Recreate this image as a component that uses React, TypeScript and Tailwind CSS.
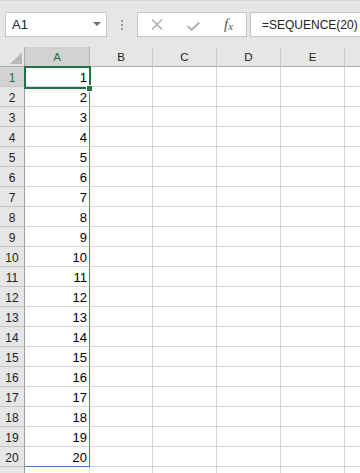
import React from "react";

const cols = [
  { name: "A", w: "w-[65px]" },
  { name: "B", w: "w-[63px]" },
  { name: "C", w: "w-[64px]" },
  { name: "D", w: "w-[64px]" },
  { name: "E", w: "w-[64px]" },
  { name: "", w: "w-[64px]" },
];

const rows = Array.from({ length: 21 }, (_, i) => i + 1);

export default function App() {
  return (
    <div className="w-[360px] h-[473px] overflow-hidden bg-white font-['Liberation_Sans',Arial,sans-serif] text-[#222]">
      {/* Toolbar */}
      <div className="h-[47px] bg-[#e6e6e6] border-t border-[#d9d9d9] flex items-start pl-[5px] pt-[11px]">
        <div className="w-[102px] h-[25px] shrink-0 bg-white border border-[#c6c6c6] flex items-center pl-[6px] pr-[5px]">
          <span className="text-[13px] leading-none text-[#222] flex-1">A1</span>
          <svg width="8" height="5" viewBox="0 0 8 5">
            <path d="M0 0 H8 L4 4 Z" fill="#6d6d6d" />
          </svg>
        </div>
        <div className="w-[30px] h-[25px] shrink-0 flex flex-col items-center justify-center gap-[2px]">
          <div className="w-[2px] h-[2px] bg-[#9a9a9a]" />
          <div className="w-[2px] h-[2px] bg-[#9a9a9a]" />
          <div className="w-[2px] h-[2px] bg-[#9a9a9a]" />
        </div>
        <div className="w-[110px] h-[25px] shrink-0 bg-white border border-[#c6c6c6] flex items-center">
          <div className="w-[37px] flex justify-center">
            <svg width="12" height="11" viewBox="0 0 12 11">
              <path d="M1 0.5 L11 10.5 M11 0.5 L1 10.5" stroke="#a8a8a8" strokeWidth="1.3" fill="none" />
            </svg>
          </div>
          <div className="w-[36px] flex justify-center pt-[3px]">
            <svg width="13" height="9" viewBox="0 0 13 9">
              <path d="M0.8 4.2 L4.5 7.8 L12.3 0.6" stroke="#a8a8a8" strokeWidth="1.8" fill="none" />
            </svg>
          </div>
          <div className="flex-1 flex justify-center items-center font-['Liberation_Serif',serif] italic text-[#5a5a5a] leading-none">
            <span className="text-[15px]">f</span>
            <span className="text-[11px] mt-[4px]">x</span>
          </div>
        </div>
        <div className="ml-[3px] w-[140px] h-[25px] shrink-0 bg-white border border-[#c6c6c6] flex items-center pl-[11px]">
          <span className="text-[12px] leading-none text-[#222] whitespace-nowrap">=SEQUENCE(20)</span>
        </div>
      </div>

      {/* Column headers */}
      <div className="flex h-[20px]">
        <div className="w-[25px] shrink-0 bg-[#e6e6e6] border-r border-b border-[#ababab] flex items-end justify-end pr-[2px] pb-[2px]">
          <svg width="12" height="12" viewBox="0 0 12 12">
            <path d="M12 0 V12 H0 Z" fill="#b8b8b8" />
          </svg>
        </div>
        {cols.map((c, i) => (
          <div
            key={i}
            className={`${c.w} shrink-0 border-r border-b flex items-end justify-center pb-[3px] text-[11.5px] leading-none ${
              i === 0
                ? "bg-[#d2d2d2] text-[#217346] border-r-[#b5b5b5] border-b-[#217346]"
                : "bg-[#e6e6e6] text-[#222] border-r-[#c8c8c8] border-b-[#ababab]"
            }`}
          >
            {c.name}
          </div>
        ))}
      </div>

      {/* Body */}
      <div className="relative">
        {rows.map((r) => (
          <div key={r} className="flex h-[20px]">
            <div
              className={`w-[25px] shrink-0 border-r border-r-[#9e9e9e] border-b border-b-[#c4c4c4] flex items-end justify-center pb-[2px] text-[12px] leading-none ${
                r === 1 ? "bg-[#d2d2d2] text-[#217346]" : "bg-[#e6e6e6] text-[#222]"
              }`}
            >
              {r <= 20 ? r : ""}
            </div>
            {cols.map((c, i) => {
              const isA = i === 0;
              const inSpill = isA && r <= 20;
              return (
                <div
                  key={i}
                  className={`${c.w} shrink-0 border-r border-b flex items-end justify-end pr-[2px] pb-[2px] text-[13px] leading-none text-black ${
                    inSpill ? "border-r-[#4a7bd0]" : "border-r-[#d4d4d4]"
                  } ${isA && r === 20 ? "border-b-[#4a7bd0]" : "border-b-[#d4d4d4]"}`}
                >
                  {isA && r <= 20 ? r : ""}
                </div>
              );
            })}
          </div>
        ))}
        {/* Selection */}
        <div className="absolute left-[24px] top-[-1px] w-[67px] h-[23px] border-2 border-[#217346]" />
        <div className="absolute left-[86px] top-[18px] w-[7px] h-[7px] bg-[#217346] border border-white" />
      </div>
    </div>
  );
}
